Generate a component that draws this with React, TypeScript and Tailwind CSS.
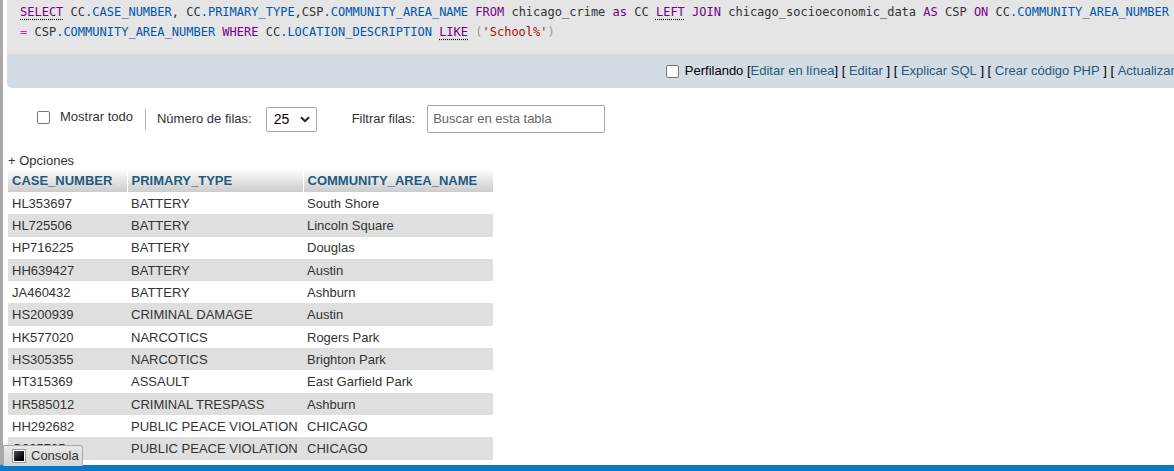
import React from "react";

const rows = [
  ["HL353697", "BATTERY", "South Shore"],
  ["HL725506", "BATTERY", "Lincoln Square"],
  ["HP716225", "BATTERY", "Douglas"],
  ["HH639427", "BATTERY", "Austin"],
  ["JA460432", "BATTERY", "Ashburn"],
  ["HS200939", "CRIMINAL DAMAGE", "Austin"],
  ["HK577020", "NARCOTICS", "Rogers Park"],
  ["HS305355", "NARCOTICS", "Brighton Park"],
  ["HT315369", "ASSAULT", "East Garfield Park"],
  ["HR585012", "CRIMINAL TRESPASS", "Ashburn"],
  ["HH292682", "PUBLIC PEACE VIOLATION", "CHICAGO"],
  ["G035795", "PUBLIC PEACE VIOLATION", "CHICAGO"],
];

const kw = "text-[#770088]";
const kwU = "text-[#770088] underline decoration-dotted decoration-black underline-offset-[3px]";
const fld = "text-[#0055aa]";

function Field({ alias, name }: { alias: string; name: string }) {
  return (
    <>
      <span className="text-[#333]">{alias}</span>
      <span className={fld}>.{name}</span>
    </>
  );
}

function Box() {
  return <span className="inline-block h-[13px] w-[13px] rounded-[2px] border border-[#767676] bg-white" />;
}

export default function App() {
  return (
    <div className="relative flex h-[471px] w-[1174px] flex-col overflow-hidden bg-white font-['Liberation_Sans',Arial,sans-serif] text-[13px] text-[#333]">
      <div className="flex min-h-0 flex-1">
        <div className="w-[3px] shrink-0 bg-[#a9a9a9]" />
        <div className="min-w-0 flex-1 pl-[4px]">
          {/* query box */}
          <div className="h-[54px] bg-[#e5e5e5] pl-[13px] pt-[2px] font-['DejaVu_Sans_Mono',monospace] text-[12px] leading-[20px] whitespace-pre text-[#333]">
            <div>
              <span className={kwU}>SELECT</span> <Field alias="CC" name="CASE_NUMBER" />, <Field alias="CC" name="PRIMARY_TYPE" />,
              <Field alias="CSP" name="COMMUNITY_AREA_NAME" /> <span className={kw}>FROM</span> chicago_crime{" "}
              <span className={kw}>as</span> CC <span className={kwU}>LEFT</span> <span className={kw}>JOIN</span>{" "}
              chicago_socioeconomic_data <span className={kw}>AS</span> CSP <span className={kw}>ON</span>{" "}
              <Field alias="CC" name="COMMUNITY_AREA_NUMBER" />
            </div>
            <div>
              <span className="text-[#ff00ff]">=</span> <Field alias="CSP" name="COMMUNITY_AREA_NUMBER" />{" "}
              <span className={kw}>WHERE</span> <Field alias="CC" name="LOCATION_DESCRIPTION" />{" "}
              <span className={kwU}>LIKE</span> <span className="text-[#999]">(</span>
              <span className="text-[#aa1111]">'School%'</span>
              <span className="text-[#999]">)</span>
            </div>
          </div>

          {/* action bar */}
          <div className="flex h-[34px] items-center justify-end overflow-hidden rounded-bl-[5px] bg-[#d3dce3]">
            <div className="mr-[-8px] flex shrink-0 items-center whitespace-pre text-black">
              <Box />
              <span className="ml-[6px]">Perfilando </span>
              <span>[</span>
              <span className="text-[#235a81]">Editar en línea</span>
              <span>] [ </span>
              <span className="text-[#235a81]">Editar</span>
              <span> ] [ </span>
              <span className="text-[#235a81]">Explicar SQL</span>
              <span> ] [ </span>
              <span className="text-[#235a81]">Crear código PHP</span>
              <span> ] [ </span>
              <span className="text-[#235a81]">Actualizar</span>
              <span> ]</span>
            </div>
          </div>

          {/* navigation controls */}
          <div className="mt-[17px] flex h-[28px] items-center pl-[30px] text-[#333]">
            <div className="mb-[4px] flex items-center">
              <Box />
              <span className="ml-[10px]">Mostrar todo</span>
            </div>
            <div className="ml-[12px] h-[21px] w-[1px] bg-[#b9b2a8]" />
            <span className="ml-[11px]">Número de filas:</span>
            <div className="ml-[14px] flex h-[25px] w-[51px] items-center justify-between rounded-[2px] border border-[#a6a6a6] bg-white pl-[7px] pr-[6px] text-[14px] text-black">
              <span>25</span>
              <svg width="10" height="7" viewBox="0 0 10 7">
                <path d="M1 1.2 L5 5.2 L9 1.2" fill="none" stroke="#222" strokeWidth="2" />
              </svg>
            </div>
            <span className="ml-[35px]">Filtrar filas:</span>
            <div className="ml-[12px] flex h-[28px] w-[178px] items-center rounded-[2px] border border-[#a6a6a6] bg-white pl-[5px] text-[#666]">
              Buscar en esta tabla
            </div>
          </div>

          <div className="mt-[20px] pl-[1px] leading-[16px] text-[#333]">+ Opciones</div>

          {/* results */}
          <table className="ml-[1px] border-collapse">
            <thead>
              <tr className="h-[23px]">
                {["CASE_NUMBER", "PRIMARY_TYPE", "COMMUNITY_AREA_NAME"].map((h, i) => (
                  <th
                    key={h}
                    className={`border-r border-white bg-gradient-to-b from-white to-[#cccccc] p-0 pl-[4px] text-left font-bold text-[#235a81] ${
                      i === 0 ? "w-[119px]" : i === 1 ? "w-[176px]" : "w-[190px]"
                    }`}
                  >
                    {h}
                  </th>
                ))}
              </tr>
            </thead>
            <tbody>
              {rows.map((r, i) => (
                <tr key={i} className={`h-[22.3px] ${i % 2 === 1 ? "bg-[#dfdfdf]" : "bg-white"}`}>
                  {r.map((c, j) => (
                    <td key={j} className="p-0 pl-[4px] pt-[1px] whitespace-nowrap text-[#333]">
                      {c}
                    </td>
                  ))}
                </tr>
              ))}
            </tbody>
          </table>
        </div>
      </div>

      <div className="h-[6px] shrink-0 bg-[#0a7bcc]" />

      {/* console tab */}
      <div className="absolute bottom-[5px] left-[3px] flex h-[21px] w-[80px] items-center rounded-tr-[3px] border border-b-0 border-[#aaa] bg-gradient-to-b from-[#e8e8e8] to-[#d4d4d4] pl-[9px] text-[#333]">
        <span className="h-[12px] w-[12px] border border-white bg-gradient-to-br from-[#555] to-black shadow-[0_0_0_1px_#999]" />
        <span className="ml-[6px]">Consola</span>
      </div>
    </div>
  );
}
